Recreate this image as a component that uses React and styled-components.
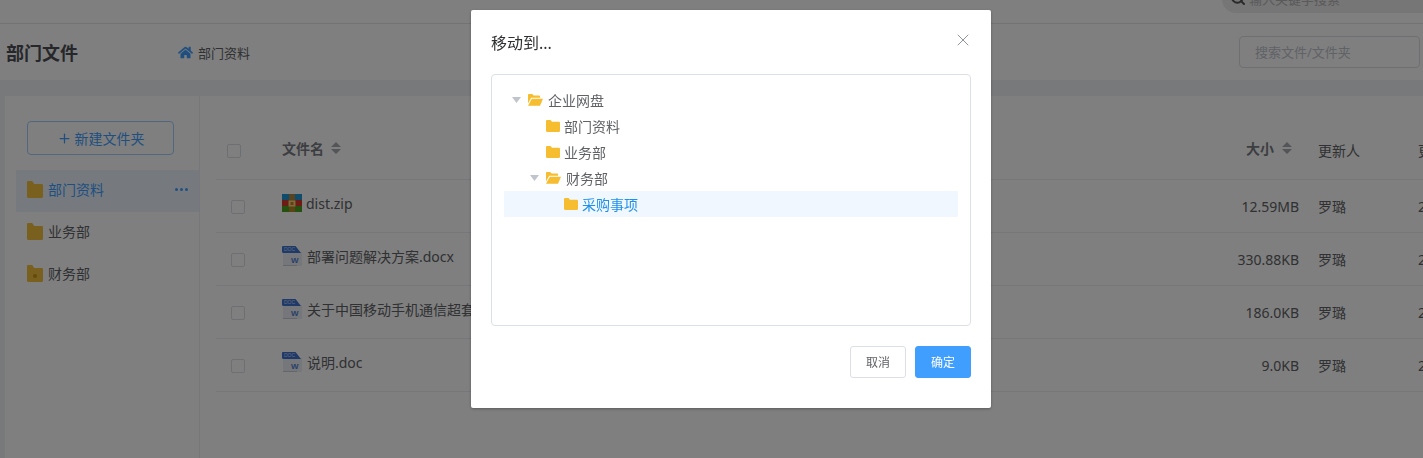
import React from "react";
import styled, { createGlobalStyle } from "styled-components";
import { FaHome } from "react-icons/fa";
import { Plus, Search, X } from "lucide-react";

const GlobalStyle = createGlobalStyle`
  html, body {
    margin: 0;
    height: 100%;
    overflow: hidden;
    background: #fff;
    font-family: "Noto Sans", "Noto Sans CJK SC", sans-serif;
    font-size: 14px;
    color: #606266;
  }
  * { box-sizing: border-box; }
`;

const Page = styled.div`
  width: 1423px;
  height: 458px;
  overflow: hidden;
  display: flex;
  flex-direction: column;
  background: #f0f2f5;
`;

const TopBar = styled.div`
  flex: none;
  height: 24px;
  background: #fff;
  border-bottom: 1px solid #e6e6e6;
  display: flex;
  justify-content: flex-end;
`;

const TopSearch = styled.div`
  width: 201px;
  height: 30px;
  margin-top: -17px;
  padding-left: 8px;
  border-radius: 0 0 0 14px;
  background: #ececec;
  display: flex;
  align-items: center;
  gap: 3px;
  font-size: 13px;
  color: #b4b4b4;
  svg { color: #555; }
`;

const Header = styled.header`
  flex: none;
  height: 56px;
  background: #fff;
  padding: 0 3px 0 6px;
  display: flex;
  align-items: center;
`;

const PageTitle = styled.h1`
  margin: 0;
  width: 172px;
  font-size: 18px;
  font-weight: 700;
  color: #4d4f54;
`;

const Crumb = styled.div`
  flex: 1;
  display: flex;
  align-items: center;
  gap: 5px;
  font-size: 13px;
  color: #606266;
  svg { color: #409eff; }
`;

const SearchInput = styled.input`
  width: 181px;
  height: 32px;
  padding: 0 15px;
  border: 1px solid #dcdfe6;
  border-radius: 4px;
  outline: none;
  font: inherit;
  font-size: 13px;
  &::placeholder { color: #c0c4cc; }
`;

const Content = styled.div`
  flex: 1;
  min-height: 0;
  margin: 16px 0 0 5px;
  background: #fff;
  display: flex;
`;

const Sidebar = styled.aside`
  flex: none;
  width: 195px;
  padding: 25px 0 0 11px;
  border-right: 1px solid #ebeef5;
`;

const NewFolder = styled.button`
  width: 147px;
  height: 34px;
  margin: 0 0 15px 11px;
  border: 1px solid #a0cfff;
  border-radius: 4px;
  background: #fff;
  color: #409eff;
  font: inherit;
  display: flex;
  align-items: center;
  justify-content: center;
  gap: 3px;
`;

const SideItem = styled.div`
  height: 42px;
  padding: 0 11px 4px;
  display: flex;
  align-items: center;
  gap: 5px;
  background: ${(p) => (p.$active ? "#ecf5ff" : "transparent")};
  color: ${(p) => (p.$active ? "#409eff" : "#606266")};
`;

const SideName = styled.span`
  flex: 1;
`;

const Dots = styled.span`
  display: flex;
  gap: 2px;
  i {
    width: 3px;
    height: 3px;
    border-radius: 50%;
    background: #409eff;
  }
`;

const Main = styled.main`
  flex: 1;
  min-width: 0;
  padding: 29px 0 0 16px;
  overflow: hidden;
`;

const Row = styled.div`
  width: 1262px;
  height: ${(p) => (p.$head ? "55px" : "53px")};
  display: grid;
  grid-template-columns: 66px 897px 120px 119px 60px;
  align-items: center;
  border-bottom: 1px solid #ebeef5;
`;

const Box = styled.span`
  display: block;
  width: 14px;
  height: 14px;
  margin: ${(p) => (p.$head ? "0 0 2px 11px" : "2px 0 0 15px")};
  border: 1px solid #dcdfe6;
  border-radius: 2px;
  background: #fff;
`;

const NameCell = styled.div`
  display: flex;
  align-items: center;
  gap: ${(p) => (p.$head ? "7px" : "4px")};
  white-space: nowrap;
  padding-bottom: ${(p) => (p.$head ? "9px" : "6px")};
`;

const HeadLabel = styled.span`
  font-weight: 700;
  color: #7a7d85;
`;

const SizeCell = styled.div`
  display: flex;
  justify-content: flex-end;
  align-items: center;
  gap: 8px;
  padding-right: ${(p) => (p.$head ? "7px" : "0")};
  padding-bottom: ${(p) => (p.$head ? "9px" : "0")};
`;

const UserCell = styled.div`
  padding-left: 19px;
  padding-bottom: ${(p) => (p.$head ? "4px" : "0")};
`;

const TimeCell = styled.div`
  padding-bottom: ${(p) => (p.$head ? "4px" : "0")};
`;

const Overlay = styled.div`
  position: fixed;
  inset: 0;
  background: rgba(0, 0, 0, 0.5);
`;

const Dialog = styled.div`
  width: 520px;
  height: 398px;
  margin: 10px 0 0 471px;
  border-radius: 2px;
  background: #fff;
  box-shadow: 0 1px 3px rgba(0, 0, 0, 0.3);
  display: flex;
  flex-direction: column;
`;

const DialogHead = styled.div`
  height: 54px;
  padding: 21px 20px 0;
  position: relative;
  font-size: 16px;
  line-height: 24px;
  color: #303133;
`;

const CloseBtn = styled.span`
  position: absolute;
  top: 20px;
  right: 18px;
  color: #909399;
  display: flex;
`;

const TreeBox = styled.div`
  height: 252px;
  margin: 10px 20px 0;
  padding: 12px 12px;
  border: 1px solid #dcdfe6;
  border-radius: 4px;
`;

const TreeRow = styled.div`
  height: 26px;
  padding-left: ${(p) => p.$level * 18}px;
  display: flex;
  align-items: center;
  background: ${(p) => (p.$selected ? "#f0f7ff" : "transparent")};
  color: ${(p) => (p.$selected ? "#1f90ea" : "#606266")};
`;

const Caret = styled.span`
  flex: none;
  width: 24px;
  padding-left: 8px;
  display: flex;
`;

const TreeLabel = styled.span`
  margin-left: ${(p) => (p.$open ? "5px" : "4px")};
`;

const DialogFoot = styled.div`
  margin-top: 20px;
  padding-right: 20px;
  display: flex;
  justify-content: flex-end;
  gap: 9px;
`;

const FootBtn = styled.button`
  width: 56px;
  height: 32px;
  padding: 0;
  border: 1px solid ${(p) => (p.$primary ? "#409eff" : "#dcdfe6")};
  border-radius: 3px;
  background: ${(p) => (p.$primary ? "#409eff" : "#fff")};
  color: ${(p) => (p.$primary ? "#fff" : "#606266")};
  font: inherit;
  font-size: 12px;
`;

const Folder = ({ size = 14, color = "#f5bd2f" }) => (
  <svg width={size} height={size * 0.86} viewBox="0 0 14 12" style={{ flex: "none" }}>
    <path d="M0 1.2C0 .5.5 0 1.2 0h3.3l1.5 1.7h6.8c.7 0 1.2.5 1.2 1.2v7.9c0 .7-.5 1.2-1.2 1.2H1.2C.5 12 0 11.5 0 10.8z" fill={color} />
  </svg>
);

const FolderOpen = () => (
  <svg width="15" height="12" viewBox="0 0 15 12" style={{ flex: "none" }}>
    <path d="M0 1C0 .4.4 0 1 0h3.2l1.4 1.6h5.6c.5 0 .9.4.9.9v1.2H3.2L0 9.5z" fill="#f5bd2f" />
    <path d="M3.8 4.8H15l-3 7H0z" fill="#f5bd2f" />
  </svg>
);

const SideFolder = ({ badge }) => (
  <svg width="16" height="17" viewBox="0 0 16 17" style={{ flex: "none" }}>
    <path d="M0 1.2C0 .5.5 0 1.2 0h4l2 3h7.6c.7 0 1.2.5 1.2 1.2v11.6c0 .7-.5 1.2-1.2 1.2H1.2C.5 17 0 16.5 0 15.8z" fill="#f4c13d" />
    {badge && <circle cx="8" cy="11" r="2" fill="#c79512" />}
  </svg>
);

const SortIcon = () => (
  <svg width="10" height="12" viewBox="0 0 10 12">
    <path d="M5 0L10 5H0zM5 12L0 7h10z" fill="#a8abb2" />
  </svg>
);

const TreeCaret = () => (
  <svg width="9" height="6" viewBox="0 0 9 6">
    <path d="M0 0h9L4.5 6z" fill="#c0c4cc" />
  </svg>
);

const ZipIcon = () => (
  <svg width="20" height="18" viewBox="0 0 20 18" style={{ flex: "none" }}>
    <rect width="20" height="6" fill="#1b9ad6" />
    <rect y="6" width="20" height="6" fill="#d9362b" />
    <rect y="12" width="20" height="6" fill="#49a020" />
    <rect x="7" width="6" height="18" fill="#c9822a" opacity="0.85" />
    <rect x="6.5" y="6.5" width="7" height="6" fill="#f9d977" />
    <rect x="8.5" y="8" width="3" height="3" fill="#c9822a" />
  </svg>
);

const DocIcon = () => (
  <svg width="21" height="21" viewBox="0 0 21 21" style={{ flex: "none" }}>
    <rect x="1" y="6" width="19" height="14" fill="#eceff4" />
    <path d="M0 1.2C0 .5.5 0 1.2 0h12.3L19 7H1.2C.5 7 0 6.5 0 5.8z" fill="#3f74d2" />
    <text x="2" y="5.4" fontSize="5" fontFamily="Liberation Sans, sans-serif" fill="#c6d8f5">DOC</text>
    <text x="9" y="17" fontSize="8" fontWeight="700" fontFamily="Liberation Sans, sans-serif" fill="#4f7fd6">W</text>
    <rect x="1" y="19" width="14" height="1" fill="#c7ccd4" />
  </svg>
);

const files = [
  { name: "dist.zip", size: "12.59MB", icon: <ZipIcon /> },
  { name: "部署问题解决方案.docx", size: "330.88KB", icon: <DocIcon /> },
  { name: "关于中国移动手机通信超套餐的通知.docx", size: "186.0KB", icon: <DocIcon /> },
  { name: "说明.doc", size: "9.0KB", icon: <DocIcon /> },
];

const App = () => {
  return (
    <>
      <GlobalStyle />
      <Page>
        <TopBar>
          <TopSearch>
            <Search size={16} strokeWidth={3} />
            <span>输入关键字搜索</span>
          </TopSearch>
        </TopBar>
        <Header>
          <PageTitle>部门文件</PageTitle>
          <Crumb>
            <FaHome size={15} />
            部门资料
          </Crumb>
          <SearchInput placeholder="搜索文件/文件夹" />
        </Header>
        <Content>
          <Sidebar>
            <NewFolder>
              <Plus size={15} />
              新建文件夹
            </NewFolder>
            <SideItem $active>
              <SideFolder />
              <SideName>部门资料</SideName>
              <Dots><i /><i /><i /></Dots>
            </SideItem>
            <SideItem>
              <SideFolder />
              <SideName>业务部</SideName>
            </SideItem>
            <SideItem>
              <SideFolder badge />
              <SideName>财务部</SideName>
            </SideItem>
          </Sidebar>
          <Main>
            <Row $head>
              <Box $head />
              <NameCell $head>
                <HeadLabel>文件名</HeadLabel>
                <SortIcon />
              </NameCell>
              <SizeCell $head>
                <HeadLabel>大小</HeadLabel>
                <SortIcon />
              </SizeCell>
              <UserCell $head>更新人</UserCell>
              <TimeCell $head>更</TimeCell>
            </Row>
            {files.map((f) => (
              <Row key={f.name}>
                <Box />
                <NameCell>
                  {f.icon}
                  {f.name}
                </NameCell>
                <SizeCell>{f.size}</SizeCell>
                <UserCell>罗璐</UserCell>
                <TimeCell>2</TimeCell>
              </Row>
            ))}
          </Main>
        </Content>
      </Page>
      <Overlay>
        <Dialog>
          <DialogHead>
            移动到...
            <CloseBtn>
              <X size={20} strokeWidth={1.2} />
            </CloseBtn>
          </DialogHead>
          <TreeBox>
            <TreeRow $level={0}>
              <Caret><TreeCaret /></Caret>
              <FolderOpen />
              <TreeLabel $open>企业网盘</TreeLabel>
            </TreeRow>
            <TreeRow $level={1}>
              <Caret />
              <Folder />
              <TreeLabel>部门资料</TreeLabel>
            </TreeRow>
            <TreeRow $level={1}>
              <Caret />
              <Folder />
              <TreeLabel>业务部</TreeLabel>
            </TreeRow>
            <TreeRow $level={1}>
              <Caret><TreeCaret /></Caret>
              <FolderOpen />
              <TreeLabel $open>财务部</TreeLabel>
            </TreeRow>
            <TreeRow $level={2} $selected>
              <Caret />
              <Folder />
              <TreeLabel>采购事项</TreeLabel>
            </TreeRow>
          </TreeBox>
          <DialogFoot>
            <FootBtn>取消</FootBtn>
            <FootBtn $primary>确定</FootBtn>
          </DialogFoot>
        </Dialog>
      </Overlay>
    </>
  );
};

export default App;
